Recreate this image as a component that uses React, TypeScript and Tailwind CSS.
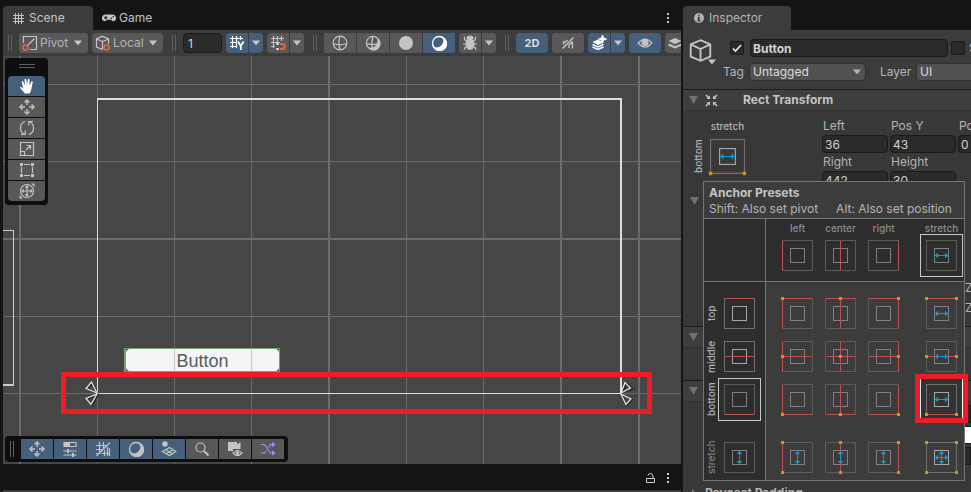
import type { ReactNode } from 'react';
import clsx from 'clsx';

const RED = '#c0504f';
const BLUE = '#0a9bd8';
const GOLD = '#cf9b00';

type Pos = 'start' | 'middle' | 'end' | 'stretch' | 'none';

const Svg = ({ size = 16, children }: { size?: number; children: ReactNode }) => (
  <svg width={size} height={size} viewBox="0 0 16 16" fill="none" stroke="currentColor" strokeWidth="1.2" aria-hidden="true" className="shrink-0">
    {children}
  </svg>
);

const Caret = () => (
  <svg width="8" height="6" viewBox="0 0 8 6" fill="currentColor" aria-hidden="true" className="shrink-0">
    <path d="M0 0.5h8L4 5.5z" />
  </svg>
);

const Foldout = () => (
  <svg width="9" height="8" viewBox="0 0 9 8" aria-hidden="true" className="shrink-0 text-[#707070]">
    <path d="M0 0h9L4.500 8z" fill="currentColor" />
  </svg>
);

const Dots = () => (
  <svg width="4" height="12" viewBox="0 0 4 12" fill="currentColor" aria-hidden="true">
    <rect x="1" y="1" width="2" height="2" />
    <rect x="1" y="5" width="2" height="2" />
    <rect x="1" y="9" width="2" height="2" />
  </svg>
);

const Handle = () => <div className="ml-[5px] mr-[3px] h-4 w-1 shrink-0 border-x border-[#606060]" />;

const HashIcon = () => (
  <svg width="11" height="11" viewBox="0 0 11 11" stroke="currentColor" aria-hidden="true">
    <path d="M2.500 0v11M5.500 0v11M8.500 0v11M0 2.500h11M0 5.500h11M0 8.500h11" />
  </svg>
);

const GamepadIcon = () => (
  <svg width="14" height="8" viewBox="0 0 14 8" aria-hidden="true">
    <path d="M3.500 0.500h7a3.500 3.500 0 0 1 2.500 6q-1.200 1.200-2.500 0.500L9 5.800H5L3.500 7Q2.200 7.700 1 6.500a3.500 3.500 0 0 1 2.500-6z" fill="currentColor" />
    <path d="M2 3.800h3.600M3.800 2v3.600" stroke="#141414" />
    <circle cx="9.300" cy="4.300" r="0.800" fill="#141414" />
    <circle cx="11.200" cy="2.800" r="0.800" fill="#141414" />
  </svg>
);

const InfoIcon = () => (
  <svg width="10" height="10" viewBox="0 0 10 10" aria-hidden="true">
    <circle cx="5" cy="5" r="5" fill="currentColor" />
    <path d="M5 1.500v1.500M3.800 4.500H5v3M3.500 7.800h3" stroke="#3c3c3c" strokeWidth="1.400" />
  </svg>
);

const CubePath = () => <path d="M8 0.800l6.800 3v8.400L8 15.200L1.200 12.200V3.800zM1.200 3.800L8 7l6.800-3.200M8 7v8.200" strokeWidth="1.300" />;

const PivotIcon = () => (
  <Svg>
    <path d="M1.500 8V1.500h13v13H8M6 10l6.500-6.500" />
    <circle cx="3.500" cy="12.500" r="2.500" stroke="#f0643c" strokeWidth="1.500" />
  </Svg>
);

const LocalIcon = () => (
  <Svg>
    <path d="M7.500 14.500L1.500 12V4l6-2.800L13.500 4v5M1.500 4l6 2.500l6-2.500M7.500 6.500v8" />
    <circle cx="11.500" cy="12.500" r="2.500" stroke="#f0643c" strokeWidth="1.500" />
  </Svg>
);

const GridYIcon = () => (
  <Svg>
    <path d="M3.500 1v12M7.500 1v12M11.500 1v4M1 3.500h13M1 7.500h7M1 11.500h7" />
    <path d="M9 6.500l2.800 4.500l2.800-4.500M11.800 11v4" strokeWidth="1.800" />
  </Svg>
);

const SnapIcon = () => (
  <Svg>
    <path d="M3.500 1v12M7.500 1v7M11.500 1v5M1 3.500h13M1 7.500h9M1 11.500h4" />
    <path d="M10 9h2.200a2.500 2.500 0 0 1 0 5H10" stroke="#f0643c" strokeWidth="2.200" />
    <path d="M6.500 9h2M6.500 14h2" stroke="#ffffff" strokeWidth="2" />
  </Svg>
);

const WireIcon = () => (
  <Svg>
    <circle cx="8" cy="8" r="6.800" />
    <path d="M1.200 8.500q6.800 2.500 13.600 0M8 1.200q-2.200 7 0 13.600" />
  </Svg>
);

const ShadedWireIcon = () => (
  <Svg>
    <path d="M12.500 2.800A7 7 0 1 1 3 12.800Q13.500 13.500 12.500 2.800z" fill="currentColor" stroke="none" />
    <circle cx="8" cy="8" r="6.600" />
    <path d="M1.500 8.500q4.500 1.500 10.500 0.300M8 1.500q-1.800 5-0.800 12" />
  </Svg>
);

const DiscIcon = () => (
  <Svg>
    <circle cx="8" cy="8" r="7" fill="currentColor" stroke="none" />
  </Svg>
);

const MoonIcon = () => (
  <Svg>
    <circle cx="8" cy="8" r="6.500" strokeWidth="1.300" />
    <path d="M12 2.500a7 7 0 1 1-9.500 9.500a7 7 0 0 0 9.500-9.500z" fill="currentColor" />
  </Svg>
);

const BugIcon = () => (
  <Svg>
    <ellipse cx="8" cy="9" rx="4.500" ry="6" fill="currentColor" stroke="none" />
    <path d="M5 3.500a3 2.500 0 0 1 6 0z" fill="currentColor" />
    <path d="M4.500 6L2.500 4.500V1.500M11.500 6l2-1.500V1.500M4 9H1M12 9h3M4.500 11.500L2.500 13v2M11.500 11.500l2 1.500v2" />
  </Svg>
);

const MuteIcon = () => (
  <Svg>
    <path d="M2.500 13.500L13.500 2.500" strokeWidth="1.500" />
    <path d="M3.500 9.500V7h2l2-2M8.500 10.500l4-4M12.500 6.500v7M9 10.500v2.500" strokeWidth="1.300" />
  </Svg>
);

const EffectsIcon = () => (
  <Svg>
    <path d="M1.500 7L7 4.500L12.500 7.500L7 10z" fill="currentColor" stroke="none" />
    <path d="M1.500 9.500L7 12l5.500-2.500M1.500 12L7 14.500l5.500-2.500" strokeWidth="1.500" />
    <path d="M11.500 0.500l1 2.500l2.500 1l-2.500 1l-1 2.500l-1-2.500L8 4l2.500-1z" fill="currentColor" />
  </Svg>
);

const EyeIcon = () => (
  <Svg>
    <path d="M1.200 8q6.800-8 13.600 0q-6.800 8-13.600 0z" />
    <circle cx="8" cy="7.500" r="3" fill="currentColor" />
  </Svg>
);

const LayersIcon = () => (
  <Svg>
    <path d="M0.500 6L7 3l6.500 3L7 9z" fill="currentColor" stroke="none" />
    <path d="M0.500 9.500L7 12.500l6.500-3" strokeWidth="2" />
  </Svg>
);

const HandIcon = () => (
  <Svg>
    <path d="M6 15.500L1.200 10q-0.500-1.500 1-1L4.300 10.500L2.800 4q0-1.400 1.200-0.800L6 7.500L5.500 1.500q0.800-1.500 1.700 0L8 7l0.800-5.500q1-1.500 1.700 0.200L10.400 7.500l2-4q1.200-0.800 1.400 0.500L12.500 10.500q-0.500 3-2 5z" fill="currentColor" stroke="none" />
  </Svg>
);

const MoveIcon = () => (
  <Svg>
    <path d="M8 2.500v3.500M8 10v3.500M2.500 8H6M10 8h3.500M5.500 3.500L8 1l2.500 2.500M5.500 12.500L8 15l2.500-2.500M3.500 5.500L1 8l2.500 2.500M12.500 5.500L15 8l-2.500 2.500" strokeWidth="1.400" />
  </Svg>
);

const RotateIcon = () => (
  <Svg>
    <path d="M6 1.500Q1 3.500 1.500 8.500T6 14.500M10 14.500q5-2 4.500-7T10 1.500M2 14.500h4.200v-4M14 1.500H9.800v4" />
  </Svg>
);

const ScaleIcon = () => (
  <Svg>
    <path d="M1.500 1.500h13v13h-13zM1.500 10.500h4v4M7 9l4.500-4.500M7.500 4.500h4v4" />
  </Svg>
);

const RectIcon = () => (
  <Svg>
    <path d="M2.500 5v6M13.500 5v6M5 2.500h6M5 13.500h6" />
    <path d="M1 1h3v3H1zM12 1h3v3h-3zM1 12h3v3H1zM12 12h3v3h-3z" fill="currentColor" stroke="none" />
  </Svg>
);

const TransformIcon = () => (
  <Svg>
    <circle cx="8" cy="8" r="6.500" />
    <path d="M8 3v10M3 8h10M6.500 4.500L8 3l1.500 1.500M6.500 11.500L8 13l1.500-1.500M4.500 6.500L3 8l1.500 1.500M11.500 6.500L13 8l-1.500 1.500" />
    <path d="M12 0.500h3.500V4zM0.500 12v3.500H4z" fill="currentColor" stroke="none" />
  </Svg>
);

const SlidersIcon = () => (
  <Svg>
    <path d="M2 1.500h12v4H2z" />
    <path d="M2 1.500h6v4H2zM5 8h2v4H5zM10 12h2v4h-2z" fill="currentColor" stroke="none" />
    <path d="M1.500 10h13M1.500 14h13" />
  </Svg>
);

const GridOffIcon = () => (
  <Svg>
    <path d="M4.500 1v12M8.500 1v6M1 4.500h10M1 8.500h6M1 12.500h3M12.500 6v9M9.500 9v6M6.500 12.500h8M14.500 7v8M1.500 15L15 1.500" />
  </Svg>
);

const GizmoIcon = () => (
  <Svg>
    <circle cx="4" cy="3" r="2.700" fill="currentColor" stroke="none" />
    <path d="M1.500 10.500L8.500 6.500l6.500 4l-6.500 4zM4.500 8.700l7 4M12 8.700l-7 4" />
  </Svg>
);

const SearchIcon = () => (
  <Svg>
    <circle cx="6.500" cy="6.500" r="4.500" />
    <path d="M10 10l4.500 4.500" strokeWidth="2" />
  </Svg>
);

const CameraIcon = () => (
  <Svg>
    <path d="M1 1h9v2.500L13.500 1v7H1zM1 8h5v2H1z" fill="currentColor" stroke="none" />
    <path d="M6 12q4.500-5 9 0q-4.500 5-9 0z" />
    <circle cx="10.500" cy="12" r="1.300" fill="currentColor" />
  </Svg>
);

const ShuffleIcon = () => (
  <Svg>
    <path d="M1 3.500h3.500l6 8.500h4M1 12h3.500l2-2.500M8.500 6.500l2-3h4" />
    <path d="M12 0.800l3.500 2.700L12 6.200zM12 9.300l3.500 2.700L12 14.700z" fill="currentColor" stroke="none" />
  </Svg>
);

const RectTransformIcon = () => (
  <svg width="13" height="13" viewBox="0 0 13 13" fill="currentColor" stroke="currentColor" aria-hidden="true">
    <path d="M1 1l3 3M12 1L9 4M1 12l3-3M12 12L9 9" strokeWidth="1.600" />
    <path d="M5 1.500V5H1.500zM8 1.500V5h3.500zM5 11.500V8H1.500zM8 11.500V8h3.500z" stroke="none" />
  </svg>
);

const LockIcon = () => (
  <svg width="9" height="10" viewBox="0 0 9 10" fill="none" stroke="currentColor" aria-hidden="true">
    <path d="M0.500 5.500h8v4h-8zM2 2.500q0.500-2 2.500-2T7 3v2.500" />
  </svg>
);

type ToolButtonProps = { label: string; on?: boolean; className?: string; children: ReactNode };

const ToolButton = ({ label, on, className, children }: ToolButtonProps) => (
  <button
    type="button"
    aria-label={label}
    aria-pressed={!!on}
    className={clsx('flex h-5 shrink-0 items-center justify-center', on ? 'bg-[#46607c]' : 'bg-[#585858]', className)}
  >
    {children}
  </button>
);

const SplitButton = ({ label, on, children }: ToolButtonProps) => (
  <div className="flex shrink-0 gap-px">
    <ToolButton label={label} on={on} className={clsx('w-[22px] rounded-l-sm', on && 'text-white')}>{children}</ToolButton>
    <ToolButton label={`${label} options`} on={on} className="w-3.5 rounded-r-sm"><Caret /></ToolButton>
  </div>
);

const ToolSelect = ({ label, value, icon, className }: { label: string; value: string; icon: ReactNode; className: string }) => (
  <div className={clsx('relative h-5 shrink-0', className)}>
    <select aria-label={label} className="block h-5 w-full appearance-none rounded-sm bg-[#585858] pl-[21px] text-xs leading-5 text-[#b4b4b4]">
      <option>{value}</option>
    </select>
    <span className="pointer-events-none absolute left-[3px] top-0.5">{icon}</span>
    <span className="pointer-events-none absolute right-1.5 top-[7px]"><Caret /></span>
  </div>
);

const shading = [
  { label: 'Wireframe', icon: <WireIcon /> },
  { label: 'Shaded Wireframe', icon: <ShadedWireIcon /> },
  { label: 'Unlit', icon: <DiscIcon /> },
  { label: 'Shaded', icon: <MoonIcon />, on: true },
];

const tools = [
  { label: 'View', icon: <HandIcon />, on: true },
  { label: 'Move', icon: <MoveIcon /> },
  { label: 'Rotate', icon: <RotateIcon /> },
  { label: 'Scale', icon: <ScaleIcon /> },
  { label: 'Rect', icon: <RectIcon /> },
  { label: 'Transform', icon: <TransformIcon /> },
];

const overlays = [
  { label: 'Tools', icon: <MoveIcon />, on: true },
  { label: 'Tool Settings', icon: <SlidersIcon />, on: true },
  { label: 'Grid and Snap', icon: <GridOffIcon />, on: true },
  { label: 'Draw Modes', icon: <MoonIcon />, on: true },
  { label: 'Orientation', icon: <GizmoIcon />, on: true },
  { label: 'Search', icon: <SearchIcon /> },
  { label: 'Cameras', icon: <CameraIcon /> },
  { label: 'AI Navigation', icon: <ShuffleIcon />, color: 'text-[#a78bfa]' },
];

const Toolbar = () => (
  <div className="flex h-[26px] shrink-0 items-center gap-1 overflow-hidden bg-[#3c3c3c] text-[#c4c4c4]">
    <Handle />
    <ToolSelect label="Tool handle position" value="Pivot" icon={<PivotIcon />} className="w-[69px]" />
    <ToolSelect label="Tool handle rotation" value="Local" icon={<LocalIcon />} className="w-[71px]" />
    <Handle />
    <input aria-label="Grid size" defaultValue="1" className="h-5 w-[39px] shrink-0 rounded-sm border border-[#1a1a1a] bg-[#2a2a2a] px-1 text-xs text-[#d2d2d2]" />
    <SplitButton label="Grid visibility" on><GridYIcon /></SplitButton>
    <SplitButton label="Grid snapping"><SnapIcon /></SplitButton>
    <Handle />
    <div className="flex shrink-0 gap-px">
      {shading.map((s) => (
        <ToolButton key={s.label} label={s.label} on={s.on} className={clsx('w-8', s.on && 'text-white')}>{s.icon}</ToolButton>
      ))}
    </div>
    <SplitButton label="Debug draw mode"><BugIcon /></SplitButton>
    <Handle />
    <ToolButton label="2D" on className="w-8 rounded-sm text-[11px] font-bold text-[#dedede]">2D</ToolButton>
    <ToolButton label="Mute audio" className="w-8 rounded-sm"><MuteIcon /></ToolButton>
    <SplitButton label="Effects" on><EffectsIcon /></SplitButton>
    <ToolButton label="Scene visibility" on className="w-8 rounded-sm"><EyeIcon /></ToolButton>
    <ToolButton label="Layers" className="w-[22px] rounded-l-sm"><LayersIcon /></ToolButton>
  </div>
);

// Grid lines at [offset, thickness], relative to the viewport
const columns = [[16, 2], [94, 1], [171, 1], [248, 1], [325, 2], [403, 1], [480, 1], [557, 2], [635, 2]];
const rows = [[28, 1], [105, 1], [182, 2], [260, 1], [337, 1]];

const SceneView = () => (
  <div className="relative min-h-0 flex-1 overflow-hidden bg-[#464646]">
    <svg aria-hidden="true" className="absolute inset-0 h-full w-full" shapeRendering="crispEdges">
      {columns.map(([x, w]) => <rect key={x} x={x} y="0" width={w} height="100%" fill="#6b6b6b" />)}
      {rows.map(([y, h]) => <rect key={y} x="0" y={y} width="100%" height={h} fill="#6b6b6b" />)}
      <path d="M94 42h525v2H94zM94 42h1v296h-1zM617 42h2v296h-2zM94 337h524v1H94z" fill="#dedede" />
      <path d="M0 174h11v1H0zM10 174h1v156h-1zM0 328h11v2H0z" fill="#cccccc" />
    </svg>
    <div className="absolute left-[121px] top-[292px] flex h-6 w-[156px] items-center justify-center border border-l-2 border-[#6ea86e] bg-[#3a3a3a]">
      <div className="flex h-full w-full items-center justify-center rounded bg-[#f5f5f5] pt-0.5 font-['Liberation_Sans'] text-lg leading-none text-[#5a5a5a]">
        Button
      </div>
    </div>
    <svg aria-hidden="true" className="absolute inset-0 h-full w-full" fill="none">
      <path d="M171.500 293v22M248.500 293v22" stroke="#000000" strokeOpacity="0.18" />
      <g strokeWidth="1.200">
        <g stroke="#1e1e1e">
          <path d="M95 338l-11-5l5-5.500zM95 339l-11 4.500l5 6z" />
          <path d="M619 337l5-9.500l5.500 5.500zM619 339l10 4.500l-5 6z" />
        </g>
        <g stroke="#ececec">
          <path d="M94 337l-11-4.500l5.500-6.500zM94 338l-11 4.500l5 6z" />
          <path d="M618 337l4-10.500l5.500 5.500zM618 338l10 5l-5 5.500z" />
        </g>
      </g>
    </svg>
    <div className="absolute left-[58px] top-[316px] h-[42px] w-[591px] border-[5px] border-[#ee1c25]" />
    <div className="absolute left-0.5 top-0.5 flex w-[43px] flex-col gap-px rounded bg-[#0e0e0e] px-[3px] pb-1 text-[#c4c4c4]">
      <div className="mx-auto mb-[7px] mt-1.5 h-1 w-4 border-y border-[#606060]" />
      {tools.map((t) => (
        <ToolButton key={t.label} label={t.label} on={t.on} className={clsx('w-full first-of-type:rounded-t-sm last:rounded-b-sm', t.on && 'text-white')}>
          {t.icon}
        </ToolButton>
      ))}
    </div>
    <div className="absolute bottom-0.5 left-0.5 flex items-center gap-px rounded bg-[#0e0e0e] py-[3px] pr-1 text-[#c4c4c4]">
      <div className="ml-[5px] mr-1.5 h-4 w-1 border-x border-[#606060]" />
      {overlays.map((o) => (
        <ToolButton key={o.label} label={o.label} on={o.on} className={clsx('w-8', o.color)}>{o.icon}</ToolButton>
      ))}
    </div>
  </div>
);

const ScenePanel = () => (
  <section className="flex min-w-0 flex-1 flex-col pl-[3px]">
    <div className="flex h-[30px] shrink-0 items-end text-xs text-[#c4c4c4]">
      <button type="button" className="flex h-6 w-[90px] items-center gap-[5px] rounded-t bg-[#3c3c3c] pl-2.5">
        <HashIcon />
        Scene
      </button>
      <button type="button" className="flex h-6 items-center gap-[3px] pl-[9px]">
        <GamepadIcon />
        Game
      </button>
      <button type="button" aria-label="Scene menu" className="ml-auto mr-[11px] flex h-6 items-center"><Dots /></button>
    </div>
    <Toolbar />
    <SceneView />
    <div className="flex h-[26px] shrink-0 items-center justify-end gap-[11px] pr-[11px] pt-0.5 text-[#d2d2d2]">
      <button type="button" aria-label="Lock"><LockIcon /></button>
      <button type="button" aria-label="Panel menu"><Dots /></button>
    </div>
    <div className="h-0.5 shrink-0 bg-[#3c3c3c]" />
  </section>
);

const offsets = { start: 0.5, middle: 15.5, end: 30.5 };

// Thumbnail of one anchor preset: parent frame, child frame and the anchors between them
const AnchorIcon = ({ h, v, size = 31, bright }: { h: Pos; v: Pos; size?: number; bright?: boolean }) => {
  const fixed = (p: Pos): p is 'start' | 'middle' | 'end' => p === 'start' || p === 'middle' || p === 'end';
  const ends = (p: Pos) => (p === 'stretch' ? [0.5, 30.5] : fixed(p) ? [offsets[p]] : []);
  return (
    <svg width={size} height={size} viewBox="0 0 31 31" fill="none" aria-hidden="true" className="overflow-visible">
      <rect x="0.500" y="0.500" width="30" height="30" stroke={bright ? '#707070' : '#5c5c5c'} />
      <rect x="8.500" y="8.500" width="14" height="14" stroke={bright ? '#a8a8a8' : '#808080'} />
      {fixed(h) && <path d={`M${offsets[h]} 1v29`} stroke={RED} />}
      {fixed(v) && <path d={`M1 ${offsets[v]}h29`} stroke={RED} />}
      {h === 'stretch' && <path d="M9 15.500h13M11.500 13v5M10.500 14v3M19.500 13v5M20.500 14v3" stroke={BLUE} />}
      {v === 'stretch' && <path d="M15.500 9v13M13 11.500h5M14 10.500h3M13 19.500h5M14 20.500h3" stroke={BLUE} />}
      {ends(h).flatMap((x) => ends(v).map((y) => <rect key={`${x}-${y}`} x={x - 1.5} y={y - 1.5} width="3" height="3" fill={GOLD} />))}
    </svg>
  );
};

type CellProps = { h: Pos; v: Pos; selected?: boolean; bright?: boolean; marked?: boolean };

const AnchorCell = ({ h, v, selected, bright, marked }: CellProps) => (
  <button
    type="button"
    aria-label={`Anchor ${h} ${v}`}
    className={clsx('relative flex size-[43px] shrink-0 items-center justify-center border', selected ? 'border-[#c8c8c8]' : marked ? 'border-white bg-[#333333]' : 'border-transparent')}
  >
    <AnchorIcon h={h} v={v} bright={bright || marked} />
    {marked && <span className="absolute -left-1.5 -top-[5px] h-[49px] w-[53px] border-[5px] border-[#ee1c25]" />}
  </button>
);

const cols: { name: string; h: Pos }[] = [
  { name: 'left', h: 'start' },
  { name: 'center', h: 'middle' },
  { name: 'right', h: 'end' },
  { name: 'stretch', h: 'stretch' },
];

const sides: { name: string; v: Pos; bright?: boolean }[] = [
  { name: 'top', v: 'start', bright: true },
  { name: 'middle', v: 'middle', bright: true },
  { name: 'bottom', v: 'end' },
  { name: 'stretch', v: 'stretch' },
];

const AnchorPresets = () => (
  <div className="absolute left-5 top-[181px] w-[262px] border border-[#757575] bg-[#3c3c3c] text-[#b4b4b4]">
    <div className="h-[37px] border-b border-[#757575] pl-[5px] pt-[3px] text-xs leading-4">
      <h3 className="font-bold text-[#c4c4c4]">Anchor Presets</h3>
      <div className="flex gap-[18px] whitespace-nowrap">
        <span>Shift: Also set pivot</span>
        <span>Alt: Also set position</span>
      </div>
    </div>
    <div className="flex border-b border-[#757575] bg-[#2d2d2d]">
      <div className="w-[62px] border-r border-[#757575]" />
      <div className="flex pb-1 pl-2.5">
        {cols.map((c) => (
          <div key={c.name} className="flex flex-col items-center last:ml-[15px]">
            <span className="h-[15px] text-[10px] font-medium leading-[18px] text-[#8c8c8c]">{c.name}</span>
            <AnchorCell h={c.h} v="none" selected={c.h === 'stretch'} />
          </div>
        ))}
      </div>
    </div>
    <div>
      {sides.map((s) => (
        <div key={s.name} className="group flex">
          <div className="flex w-[62px] border-r border-[#757575] bg-[#2d2d2d] group-first:pt-2.5 group-last:pb-px group-last:pt-[15px]">
            <span className={clsx('flex h-[43px] w-3.5 rotate-180 items-center justify-center text-[10px] font-medium leading-3 [writing-mode:vertical-rl]', s.v === 'stretch' ? 'text-[#808080]' : 'text-[#b4b4b4]')}>
              {s.name}
            </span>
            <AnchorCell h="none" v={s.v} bright={s.bright} selected={s.v === 'end'} />
          </div>
          <div className="flex pl-2.5 group-first:pt-2.5 group-last:pt-[15px]">
            {cols.map((c) => (
              <div key={c.name} className="last:ml-[15px]">
                <AnchorCell h={c.h} v={s.v} marked={c.h === 'stretch' && s.v === 'end'} bright={c.h === 'stretch' && s.v === 'stretch'} />
              </div>
            ))}
          </div>
        </div>
      ))}
    </div>
  </div>
);

const Field = ({ label, value }: { label: string; value: string }) => (
  <label className="w-[66px] shrink-0">
    <span className="block h-[18px] pl-px leading-[18px]">{label}</span>
    <input defaultValue={value} className="block h-[18px] w-full rounded-sm border border-[#1a1a1a] bg-[#2a2a2a] px-0.5 text-[#d2d2d2]" />
  </label>
);

const InspectorSelect = ({ id, value, className }: { id: string; value: string; className: string }) => (
  <div className={clsx('relative shrink-0', className)}>
    <select id={id} className="block h-[18px] w-full appearance-none rounded-sm border border-[#303030] bg-[#515151] pl-[3px] leading-4 text-[#dcdcdc]">
      <option>{value}</option>
    </select>
    <span className="pointer-events-none absolute right-[5px] top-1.5"><Caret /></span>
  </div>
);

const SectionHeader = ({ children }: { children?: ReactNode }) => (
  <div className="flex h-[22px] shrink-0 items-center border-b border-t border-b-[#303030] border-t-[#1a1a1a] bg-[#3e3e3e] pl-1.5">
    <Foldout />
    {children}
  </div>
);

const Inspector = () => (
  <section className="relative flex w-72 shrink-0 flex-col overflow-hidden bg-[#383838] text-xs text-[#b4b4b4]">
    <div className="flex h-[30px] shrink-0 items-end bg-[#141414]">
      <button type="button" className="flex h-6 w-[108px] items-center gap-[5px] rounded-t bg-[#3c3c3c] pl-[11px] text-[#b4b4b4]">
        <InfoIcon />
        Inspector
      </button>
    </div>
    <div className="flex h-[59px] shrink-0 bg-[#3c3c3c] pl-1.5 pt-[9px]">
      <button type="button" aria-label="Object icon" className="flex h-[26px] w-[30px] shrink-0 items-start text-[#c4c4c4]">
        <Svg size={23}><CubePath /></Svg>
        <span className="-ml-1 self-end"><Caret /></span>
      </button>
      <div className="ml-1 flex flex-col gap-1.5">
        <div className="flex h-[18px] items-center">
          <span className="relative ml-[7px] mr-1.5 size-3.5 shrink-0">
            <input type="checkbox" defaultChecked aria-label="Active" className="peer block size-3.5 appearance-none rounded-xs border border-[#1a1a1a] bg-[#2a2a2a]" />
            <svg viewBox="0 0 14 14" fill="none" stroke="#ececec" strokeWidth="1.600" className="pointer-events-none absolute inset-0 hidden peer-checked:block">
              <path d="M3 7.500l2.500 2.500L11 4" />
            </svg>
          </span>
          <input aria-label="Name" defaultValue="Button" className="h-[18px] w-[198px] shrink-0 rounded-sm border border-[#1a1a1a] bg-[#2a2a2a] px-0.5 font-bold text-[#d2d2d2]" />
          <input id="static" type="checkbox" className="ml-[3px] size-3.5 shrink-0 appearance-none rounded-xs border border-[#1a1a1a] bg-[#2a2a2a]" />
          <label htmlFor="static" className="ml-1">Static</label>
        </div>
        <div className="flex h-[18px] items-center">
          <label htmlFor="tag" className="w-[26px]">Tag</label>
          <InspectorSelect id="tag" value="Untagged" className="w-[117px]" />
          <label htmlFor="layer" className="ml-3.5 w-9">Layer</label>
          <InspectorSelect id="layer" value="UI" className="w-[100px]" />
        </div>
      </div>
    </div>
    <SectionHeader>
      <span className="ml-[7px] text-[#c4c4c4]"><RectTransformIcon /></span>
      <h2 className="ml-[25px] font-bold text-[#c4c4c4]">Rect Transform</h2>
    </SectionHeader>
    <div className="flex h-[215px] shrink-0 flex-col">
      <div className="flex pt-1.5">
        <span className="ml-2 mt-[22px] flex h-[34px] w-[13px] rotate-180 items-center justify-center text-[10px] font-medium leading-3 [writing-mode:vertical-rl]">bottom</span>
        <div className="ml-1.5 w-[35px]">
          <div className="flex h-[22px] justify-center text-[10px] font-medium leading-[18px]">stretch</div>
          <button type="button" aria-label="Anchor presets" className="block"><AnchorIcon h="stretch" v="end" size={35} bright /></button>
        </div>
        <div className="ml-[77px] flex flex-col">
          <div className="flex gap-0.5">
            <Field label="Left" value="36" />
            <Field label="Pos Y" value="43" />
            <Field label="Pos Z" value="0" />
          </div>
          <div className="flex gap-0.5">
            <Field label="Right" value="442" />
            <Field label="Height" value="30" />
          </div>
        </div>
      </div>
      <div className="mt-[3px] flex h-[18px] items-center pl-[7px]"><Foldout /></div>
      <div className="ml-auto mt-[68px] flex flex-col leading-5">
        <span className="-mr-0.5 block w-2">Z</span>
        <span className="-mr-0.5 block w-2">Z</span>
      </div>
    </div>
    <SectionHeader />
    <div className="h-8 shrink-0" />
    <SectionHeader />
    <div className="flex h-[82px] shrink-0 flex-col items-end gap-[3px] pt-[3px]">
      <div className="h-[18px] w-16 border border-[#1a1a1a] bg-[#2a2a2a]" />
      <div className="h-[18px] w-16 border-y border-[#1a1a1a] bg-white" />
      <div className="h-[18px] w-16 border border-[#1a1a1a] bg-[#2a2a2a]" />
    </div>
    <div className="flex h-[18px] shrink-0 items-center gap-2 pl-[9px] font-bold">
      <svg width="5" height="9" viewBox="0 0 5 9" fill="#707070" aria-hidden="true"><path d="M0 0l5 4.500L0 9z" /></svg>
      Raycast Padding
    </div>
    <AnchorPresets />
  </section>
);

const App = () => {
  return (
    <main className="flex h-screen gap-0.5 overflow-hidden bg-[#141414] font-['Inter',sans-serif]">
      <ScenePanel />
      <Inspector />
    </main>
  );
};

export default App;
